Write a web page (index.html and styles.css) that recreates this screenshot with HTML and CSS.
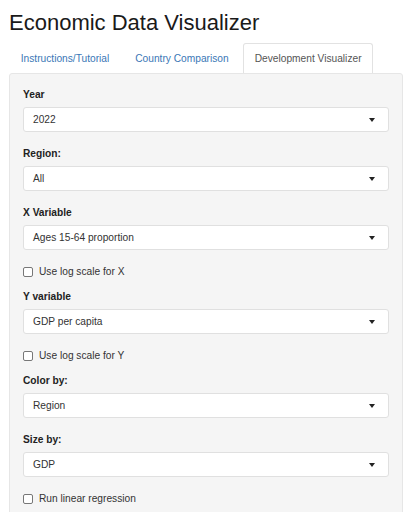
FILE: index.html
```html
<!DOCTYPE html>
<html>
<head>
<meta charset="utf-8">
<link rel="stylesheet" href="styles.css">
</head>
<body>
<div class="container">
  <h2 class="title">Economic Data Visualizer</h2>
  <ul class="tabs">
    <li class="tab"><a>Instructions/Tutorial</a></li>
    <li class="tab"><a>Country Comparison</a></li>
    <li class="tab active"><a>Development Visualizer</a></li>
  </ul>
  <div class="well">
    <div class="group">
      <label class="lbl">Year</label>
      <div class="select"><span>2022</span><i class="caret"></i></div>
    </div>
    <div class="group">
      <label class="lbl">Region:</label>
      <div class="select"><span>All</span><i class="caret"></i></div>
    </div>
    <div class="group">
      <label class="lbl">X Variable</label>
      <div class="select"><span>Ages 15-64 proportion</span><i class="caret"></i></div>
    </div>
    <div class="check"><span class="box"></span><span>Use log scale for X</span></div>
    <div class="group">
      <label class="lbl">Y variable</label>
      <div class="select"><span>GDP per capita</span><i class="caret"></i></div>
    </div>
    <div class="check"><span class="box"></span><span>Use log scale for Y</span></div>
    <div class="group">
      <label class="lbl">Color by:</label>
      <div class="select"><span>Region</span><i class="caret"></i></div>
    </div>
    <div class="group">
      <label class="lbl">Size by:</label>
      <div class="select"><span>GDP</span><i class="caret"></i></div>
    </div>
    <div class="check"><span class="box"></span><span>Run linear regression</span></div>
  </div>
</div>
</body>
</html>
```

FILE: styles.css
```css
* { box-sizing: border-box; }
html, body { margin: 0; padding: 0; background: #fff; }
body {
  font-family: "Liberation Sans", Arial, sans-serif;
  font-size: 10.2px;
  line-height: 16px;
  color: #333;
}
.container { padding: 0 10px 0 9px; }
.title {
  margin: 0;
  padding-top: 10px;
  font-size: 22px;
  line-height: 25px;
  font-weight: 400;
  color: #1a1a1a;
  height: 43px;
}
.tabs {
  list-style: none;
  margin: 0;
  padding: 0;
  display: flex;
  height: 30px;
  white-space: nowrap;
}
.tab { margin-right: 2.5px; }
.tab a {
  display: block;
  height: 30px;
  padding: 7px 10.75px 0;
  color: #3a77b6;
  border: 1px solid transparent;
  border-bottom: 0;
  border-radius: 3px 3px 0 0;
}
.tab.active a {
  color: #555;
  background: #fff;
  border-color: #e2e2e2;
}
.well {
  background: #f5f5f5;
  border: 1px solid #e6e6e6;
  border-radius: 3px;
  padding: 13px 13px 20px;
}
.group { margin-bottom: 14px; }
.lbl {
  display: block;
  font-weight: 700;
  color: #222;
  margin-bottom: 4px;
}
.select {
  height: 25px;
  background: #fff;
  border: 1px solid #e0e0e0;
  border-radius: 3px;
  display: flex;
  align-items: center;
  justify-content: space-between;
  padding: 0 13px 0 9px;
  color: #333;
}
.caret {
  width: 0;
  height: 0;
  border-style: solid;
  border-width: 4px 3.5px 0 3.5px;
  border-color: #222 transparent transparent transparent;
  margin-top: 1px;
}
.check {
  display: flex;
  align-items: center;
  height: 16px;
  margin-bottom: 9px;
  color: #333;
}
.box {
  width: 10px;
  height: 10px;
  border: 1px solid #777;
  border-radius: 2px;
  background: #fff;
  margin-right: 6px;
}
```
